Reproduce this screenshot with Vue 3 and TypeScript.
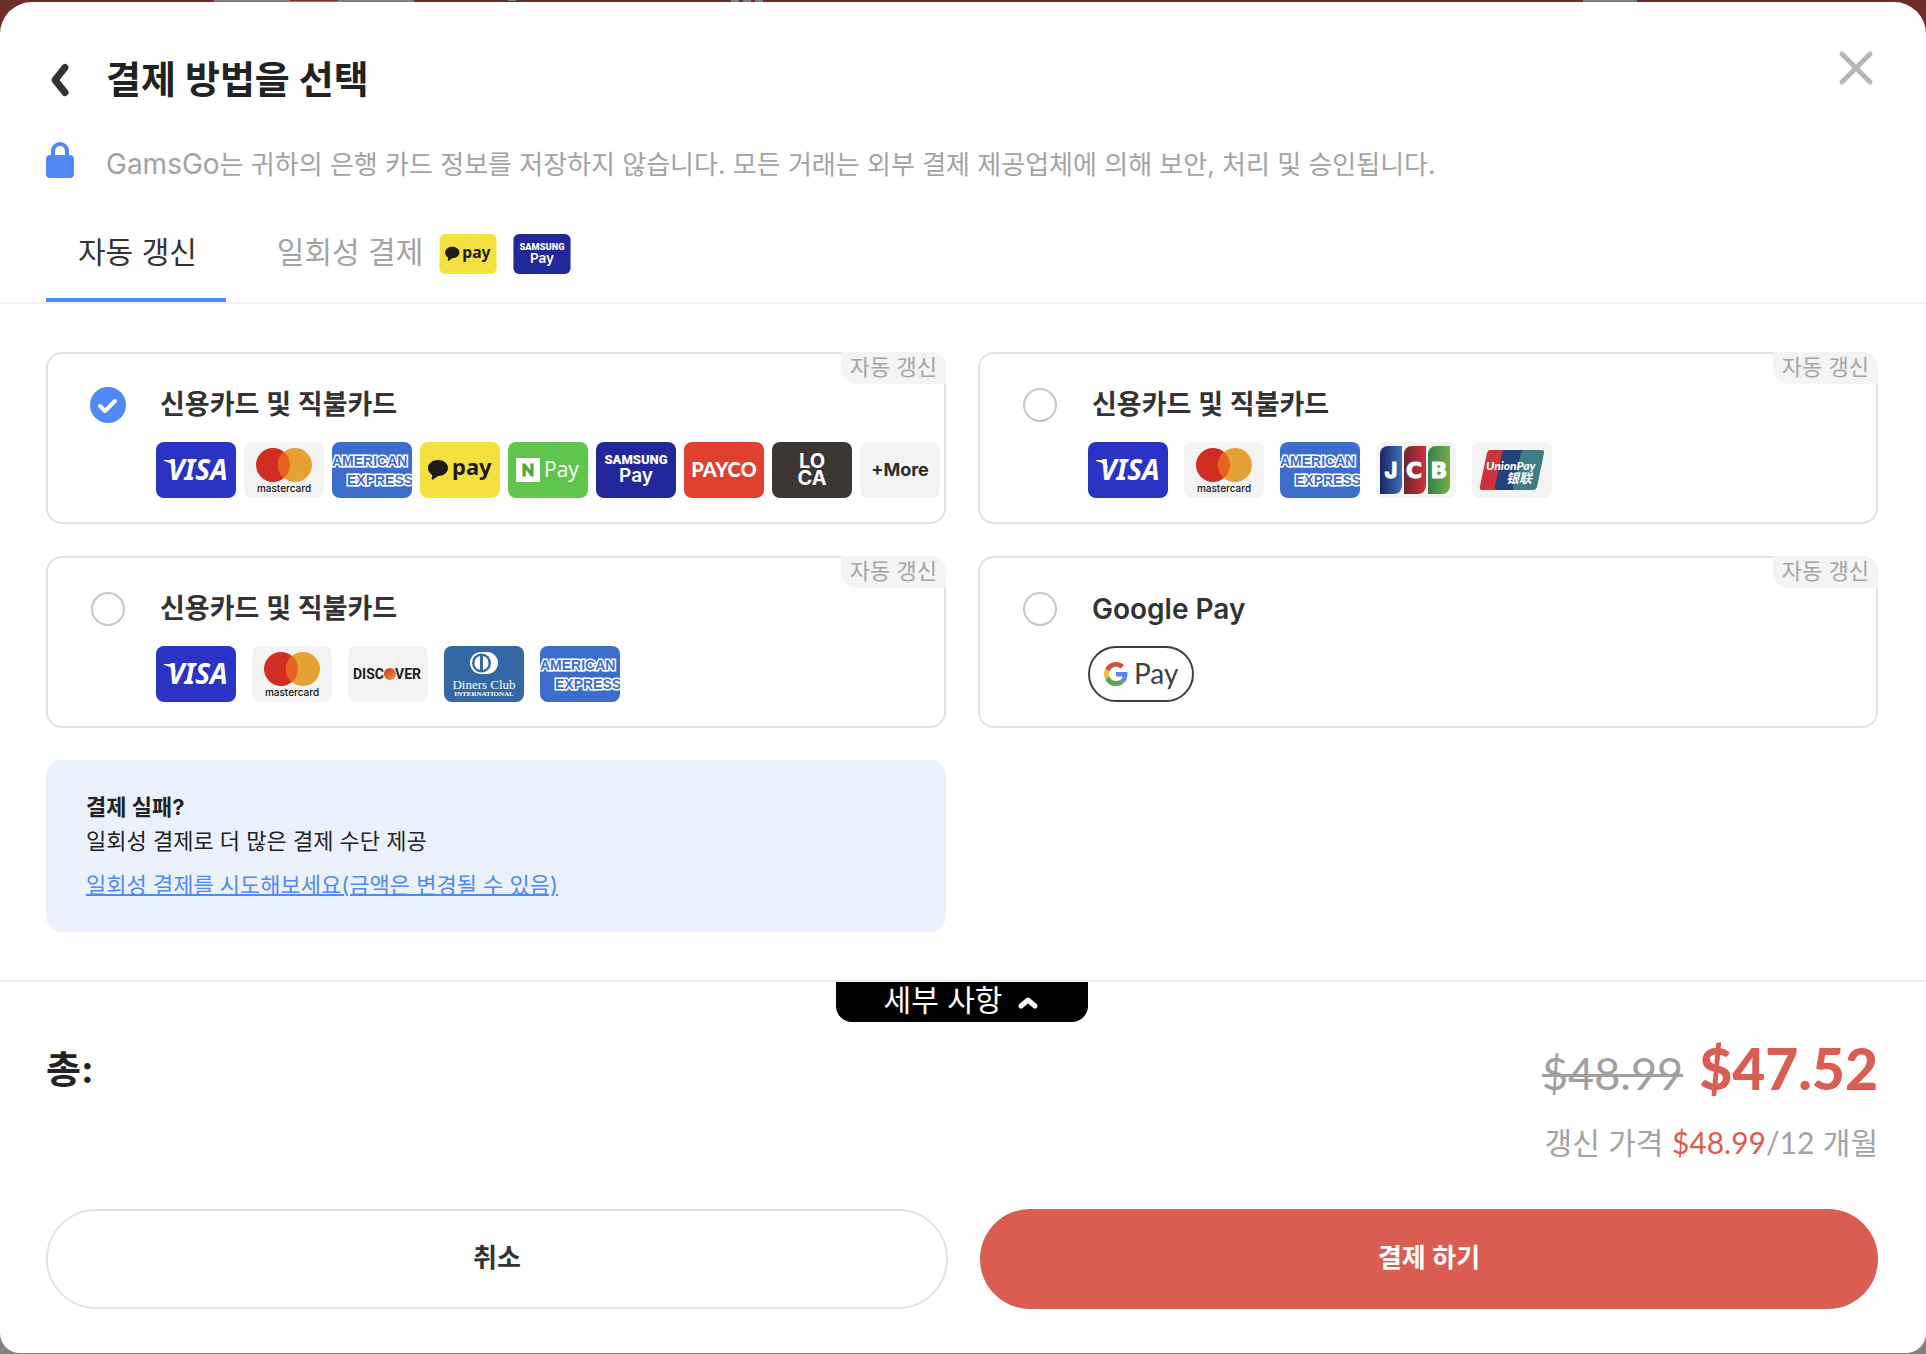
<script setup lang="ts">
import { ref } from 'vue'

type Logo =
  | 'visa' | 'mastercard' | 'amex' | 'kakao' | 'naver' | 'samsung' | 'payco'
  | 'loca' | 'more' | 'jcb' | 'unionpay' | 'discover' | 'diners' | 'gpay'

interface Method {
  id: string
  name: string
  logos: Logo[]
  dense?: boolean
}

const methods: Method[] = [
  {
    id: 'card-kr',
    name: '신용카드 및 직불카드',
    dense: true,
    logos: ['visa', 'mastercard', 'amex', 'kakao', 'naver', 'samsung', 'payco', 'loca', 'more'],
  },
  {
    id: 'card-asia',
    name: '신용카드 및 직불카드',
    logos: ['visa', 'mastercard', 'amex', 'jcb', 'unionpay'],
  },
  {
    id: 'card-global',
    name: '신용카드 및 직불카드',
    logos: ['visa', 'mastercard', 'discover', 'diners', 'amex'],
  },
  { id: 'google-pay', name: 'Google Pay', logos: ['gpay'] },
]

const tabs: { id: string; label: string; logos: Logo[] }[] = [
  { id: 'auto', label: '자동 갱신', logos: [] },
  { id: 'once', label: '일회성 결제', logos: ['kakao', 'samsung'] },
]

const selected = ref('card-kr')
const activeTab = ref('auto')
</script>

<template>
  <div class="backdrop">
    <svg width="0" height="0" class="defs" aria-hidden="true">
      <defs>
        <linearGradient id="jcb-blue"><stop offset="0" stop-color="#1c2466" /><stop offset="1" stop-color="#3a72b8" /></linearGradient>
        <linearGradient id="jcb-red"><stop offset="0" stop-color="#6a2730" /><stop offset="1" stop-color="#d3303c" /></linearGradient>
        <linearGradient id="jcb-green"><stop offset="0" stop-color="#33804b" /><stop offset="1" stop-color="#76b043" /></linearGradient>
        <linearGradient id="disc-orange" x1="0" y1="0" x2="1" y2="1"><stop offset="0.2" stop-color="#c9472c" /><stop offset="1" stop-color="#ee9a3a" /></linearGradient>

        <symbol id="logo-visa" viewBox="0 0 80 56">
          <rect width="80" height="56" rx="8" fill="#2b33c4" />
          <path d="M8 18h10l2 9c-3-5-7-7-12-8z" fill="#fff" />
          <text x="12" y="38" font-family="Noto Sans" font-size="28" font-weight="700" font-style="italic" fill="#fff">VISA</text>
        </symbol>
        <symbol id="logo-mastercard" viewBox="0 0 80 56">
          <rect width="80" height="56" rx="8" fill="#f4f4f4" />
          <circle cx="29" cy="23" r="17" fill="#d22d22" />
          <circle cx="51" cy="23" r="17" fill="#e6a136" />
          <path d="M40 10a17 17 0 0 1 0 26a17 17 0 0 1 0-26z" fill="#e7641f" />
          <text x="40" y="50" text-anchor="middle" font-family="Inter" font-size="10" font-weight="500" fill="#111">mastercard</text>
        </symbol>
        <symbol id="logo-amex" viewBox="0 0 80 56">
          <rect width="80" height="56" rx="8" fill="#3d6dcb" />
          <g font-family="Liberation Sans" font-size="14" font-weight="700" fill="#3d6dcb" stroke="#fff" stroke-width="3" paint-order="stroke">
            <text x="0" y="24">AMERICAN</text>
            <text x="15" y="43">EXPRESS</text>
          </g>
        </symbol>
        <symbol id="logo-kakao" viewBox="0 0 80 56">
          <rect width="80" height="56" rx="8" fill="#f4e13f" />
          <path d="M18 18c5.500 0 10 3.500 10 8s-4.500 8-10 8l-5 3.500c-1 .6-1.500 0-1.300-.9l.6-3.600C9.500 31.500 8 29 8 26c0-4.500 4.500-8 10-8z" fill="#1e1a16" />
          <text x="32" y="33" font-family="Noto Sans" font-size="22" font-weight="700" fill="#1e1a16">pay</text>
        </symbol>
        <symbol id="logo-naver" viewBox="0 0 80 56">
          <rect width="80" height="56" rx="8" fill="#5fc54e" />
          <rect x="8" y="16" width="24" height="24" fill="#fff" />
          <text x="20" y="34" text-anchor="middle" font-family="Lato" font-size="16" font-weight="900" fill="#4aa83c" stroke="#4aa83c">N</text>
          <text x="36" y="35" font-family="Open Sans" font-size="21" fill="#fff">Pay</text>
        </symbol>
        <symbol id="logo-samsung" viewBox="0 0 80 56">
          <rect width="80" height="56" rx="8" fill="#22289a" />
          <text x="40" y="22" text-anchor="middle" font-family="Roboto" font-size="13" font-weight="900" fill="#fff">SAMSUNG</text>
          <text x="40" y="40" text-anchor="middle" font-family="Inter" font-size="19" font-weight="600" fill="#fff">Pay</text>
        </symbol>
        <symbol id="logo-payco" viewBox="0 0 80 56">
          <rect width="80" height="56" rx="8" fill="#e0412e" />
          <text x="40" y="35" text-anchor="middle" font-family="Lato" font-size="20" font-weight="900" fill="#fff">PAYCO</text>
        </symbol>
        <symbol id="logo-loca" viewBox="0 0 80 56">
          <rect width="80" height="56" rx="8" fill="#3b3632" />
          <g text-anchor="middle" font-family="Inter" font-size="20" font-weight="700" fill="#fff">
            <text x="40" y="26">LO</text>
            <text x="40" y="43">CA</text>
          </g>
        </symbol>
        <symbol id="logo-more" viewBox="0 0 80 56">
          <rect width="80" height="56" rx="8" fill="#f4f4f4" />
          <text x="40" y="34" text-anchor="middle" font-family="Inter" font-size="18" font-weight="700" fill="#2b2b2b">+More</text>
        </symbol>
        <symbol id="logo-jcb" viewBox="0 0 80 56">
          <rect width="80" height="56" rx="8" fill="#f4f4f4" />
          <path d="M4 52V12a8 8 0 0 1 8-8h14v40a8 8 0 0 1-8 8z" fill="url(#jcb-blue)" />
          <path d="M28 52V12a8 8 0 0 1 8-8h14v40a8 8 0 0 1-8 8z" fill="url(#jcb-red)" />
          <path d="M52 52V12a8 8 0 0 1 8-8h14v40a8 8 0 0 1-8 8z" fill="url(#jcb-green)" />
          <g text-anchor="middle" font-weight="700" fill="#fff" stroke="#fff">
            <text x="15" y="36" font-family="Inter" font-size="22">J</text>
            <text x="38" y="36" font-family="DejaVu Sans" font-size="22">C</text>
            <text x="63" y="36" font-family="DejaVu Sans" font-size="22">B</text>
          </g>
        </symbol>
        <symbol id="logo-unionpay" viewBox="0 0 80 56">
          <rect width="80" height="56" rx="8" fill="#f4f4f4" />
          <path d="M18 8h18L28 48H10q-3 0-2-4l7-33q1-3 3-3z" fill="#cd3339" />
          <path d="M33 8h24L48 48H26q-4 0-3-4l7-33q1-3 3-3z" fill="#22427c" />
          <path d="M52 8h17q4 0 3 3l-7 34q-1 3-4 3H44q-4 0-3-4l8-33q1-3 3-3z" fill="#3f7c85" />
          <text x="14" y="28" font-family="Lato" font-size="12" font-weight="900" font-style="italic" fill="#fff">UnionPay</text>
          <text x="34" y="41" font-family="Noto Sans CJK SC" font-size="13" font-weight="700" font-style="italic" fill="#fff">银联</text>
        </symbol>
        <symbol id="logo-discover" viewBox="0 0 80 56">
          <rect width="80" height="56" rx="8" fill="#f4f4f4" />
          <circle cx="42" cy="28" r="6" fill="url(#disc-orange)" />
          <g font-family="Roboto" font-size="14" font-weight="700" fill="#1f1f1f">
            <text x="5" y="33">DISC</text>
            <text x="47" y="33">VER</text>
          </g>
        </symbol>
        <symbol id="logo-diners" viewBox="0 0 80 56">
          <rect width="80" height="56" rx="8" fill="#3468a5" />
          <path d="M37 6h6a11 11 0 0 1 0 22h-6a11 11 0 0 1 0-22z" fill="#fff" />
          <circle cx="37.500" cy="17" r="9.500" fill="#3468a5" />
          <path d="M36 10v14a7.200 7.200 0 0 1 0-14zM39 10v14a7.200 7.200 0 0 0 0-14z" fill="#fff" />
          <g text-anchor="middle" font-family="Liberation Serif" fill="#fff">
            <text x="40" y="43" font-size="13">Diners Club</text>
            <text x="40" y="50" font-size="7" font-weight="700">INTERNATIONAL</text>
          </g>
        </symbol>
        <symbol id="logo-gpay" viewBox="0 0 106 56">
          <rect x="1" y="1" width="104" height="54" rx="27" fill="#fff" stroke="#3c4043" stroke-width="2" />
          <g transform="translate(16 16) scale(.5)">
            <path fill="#d3503e" d="M24 9.500c3.540 0 6.710 1.220 9.210 3.600l6.850-6.850C35.900 2.380 30.470 0 24 0 14.620 0 6.510 5.380 2.560 13.220l7.980 6.190C12.430 13.720 17.740 9.500 24 9.500z" />
            <path fill="#5b86f0" d="M46.980 24.550c0-1.570-.15-3.090-.38-4.550H24v9.020h12.940c-.58 2.960-2.260 5.480-4.780 7.180l7.730 6c4.510-4.180 7.090-10.360 7.090-17.650z" />
            <path fill="#eebb35" d="M10.530 28.590c-.48-1.450-.76-2.990-.76-4.590s.27-3.140.76-4.590l-7.980-6.190C.92 16.460 0 20.120 0 24c0 3.880.92 7.540 2.560 10.780l7.970-6.190z" />
            <path fill="#57a65a" d="M24 48c6.480 0 11.930-2.130 15.890-5.810l-7.730-6c-2.150 1.450-4.920 2.300-8.160 2.300-6.260 0-11.570-4.220-13.470-9.910l-7.980 6.190C6.510 42.620 14.620 48 24 48z" />
          </g>
          <text x="46" y="38" font-family="Lato" font-size="28" fill="#3c4043">Pay</text>
        </symbol>
      </defs>
    </svg>

    <main class="sheet">
      <header class="header">
        <button class="back" type="button" aria-label="뒤로">
          <svg width="28" height="40" viewBox="0 0 28 40"><path d="M19 7.500 9 20l10 12.500" fill="none" stroke="#333" stroke-width="7" stroke-linecap="round" stroke-linejoin="round" /></svg>
        </button>
        <h1 class="title">결제 방법을 선택</h1>
        <button class="close" type="button" aria-label="닫기">
          <svg width="44" height="40" viewBox="0 0 44 40"><path d="M8 6l28 28M36 6 8 34" fill="none" stroke="#b8b8b8" stroke-width="5" stroke-linecap="round" /></svg>
        </button>
      </header>

      <p class="notice">
        <svg class="lock" width="28" height="36" viewBox="0 0 28 36" aria-hidden="true">
          <rect y="13" width="28" height="23" rx="4" fill="#5089f5" />
          <path d="M7 15V9a7 7 0 0 1 14 0v6" fill="none" stroke="#5089f5" stroke-width="4" />
        </svg>
        <span class="notice-text"><span class="brand">GamsGo</span>는 귀하의 은행 카드 정보를 저장하지 않습니다. 모든 거래는 외부 결제 제공업체에 의해 보안, 처리 및 승인됩니다.</span>
      </p>

      <nav class="tabs" role="tablist">
        <button
          v-for="tab in tabs"
          :key="tab.id"
          type="button"
          role="tab"
          class="tab"
          :class="{ active: tab.id === activeTab }"
          :aria-selected="tab.id === activeTab"
          @click="activeTab = tab.id"
        >
          <span class="tab-label">{{ tab.label }}</span>
          <svg v-for="logo in tab.logos" :key="logo" class="tab-logo"><use :href="`#logo-${logo}`" /></svg>
        </button>
      </nav>

      <section class="methods">
        <label v-for="m in methods" :key="m.id" class="card" :for="m.id">
          <span class="tag">자동 갱신</span>
          <input :id="m.id" v-model="selected" class="radio" type="radio" name="method" :value="m.id" />
          <span class="card-body">
            <span class="card-name" :class="{ latin: m.id === 'google-pay' }">{{ m.name }}</span>
            <span class="logos" :class="{ dense: m.dense }">
              <svg v-for="logo in m.logos" :key="logo" class="logo" :class="{ wide: logo === 'gpay' }"><use :href="`#logo-${logo}`" /></svg>
            </span>
          </span>
        </label>

        <aside class="help">
          <strong>결제 실패?</strong>
          <span>일회성 결제로 더 많은 결제 수단 제공</span>
          <a href="#once" @click.prevent="activeTab = 'once'">일회성 결제를 시도해보세요(금액은 변경될 수 있음)</a>
        </aside>
      </section>

      <footer class="footer">
        <button class="details" type="button">
          <span class="details-label">세부 사항</span>
          <svg width="24" height="16" viewBox="0 0 24 16"><path d="M5 12l7-6 7 6" fill="none" stroke="#fff" stroke-width="5" stroke-linecap="round" stroke-linejoin="round" /></svg>
        </button>
        <div class="total">
          <span class="total-label">총:</span>
          <span class="prices"><s class="old">$48.99</s><b class="new">$47.52</b></span>
        </div>
        <p class="renewal">갱신 가격 <span class="num accent">$48.99</span><span class="num">/12</span> 개월</p>
        <div class="actions">
          <button class="action cancel" type="button">취소</button>
          <button class="action pay" type="button">결제 하기</button>
        </div>
      </footer>
    </main>
  </div>
</template>

<style>
body {
  background: #808080;
}
</style>

<style scoped>
* {
  box-sizing: border-box;
}
.backdrop {
  padding-top: 2px;
  color: #222;
  font-family: "Inter", "Noto Sans CJK KR", sans-serif;
  background:
    linear-gradient(#80302a, #80302a) 290px 0 / 48px 1px no-repeat,
    linear-gradient(#808080, #808080) 214px 0 / 200px 2px no-repeat,
    linear-gradient(#808080, #808080) 508px 0 / 8px 1px no-repeat,
    repeating-linear-gradient(90deg, #808080 0 8px, #6f2d29 8px 12px) 731px 0 / 32px 2px no-repeat,
    linear-gradient(#808080, #808080) 1583px 0 / 54px 2px no-repeat,
    linear-gradient(#6f2d29, #6f2d29) 0 0 / 100% 60px no-repeat;
}
.defs {
  position: absolute;
}
button {
  margin: 0;
  padding: 0;
  border: 0;
  background: none;
  font: inherit;
  color: inherit;
  cursor: pointer;
}
svg {
  display: block;
}
.sheet {
  background: #fff;
  border-radius: 32px 32px 20px 20px;
  padding-bottom: 44px;
}
.header {
  display: flex;
  align-items: flex-start;
  padding: 46px 48px 0 46px;
}
.back {
  width: 60px;
  padding-top: 12px;
}
.title {
  flex: 1;
  margin: 7px 0 0;
  font-size: 38px;
  line-height: 48px;
  font-weight: 700;
}
.notice {
  display: flex;
  gap: 32px;
  margin: 39px 48px 0 46px;
  font-size: 26px;
  line-height: 40px;
  color: #a3a3a3;
}
.notice-text {
  padding-top: 2px;
}
.lock {
  flex: none;
}
.brand {
  font-size: 28px;
}
.tabs {
  display: flex;
  gap: 19px;
  margin-top: 19px;
  padding-left: 46px;
  border-bottom: 2px solid #f1f1f1;
}
.tab {
  position: relative;
  display: flex;
  align-items: center;
  gap: 16px;
  height: 98px;
  padding: 2px 29px 0 32px;
  font-size: 30px;
  color: #a3a3a3;
}
.tab-label {
  padding-bottom: 8px;
}
.tab.active {
  color: #333;
}
.tab.active::after {
  content: "";
  position: absolute;
  left: 0;
  right: 0;
  bottom: 0;
  height: 4px;
  background: #5089f5;
}
.tab-logo {
  width: 58px;
  height: 40px;
}
.methods {
  display: grid;
  grid-template-columns: 1fr 1fr;
  gap: 32px;
  padding: 48px 48px 48px 46px;
}
.card {
  position: relative;
  display: flex;
  min-width: 0;
  height: 172px;
  padding: 33px 0 0 42px;
  border: 2px solid #e1e1e1;
  border-radius: 16px;
  cursor: pointer;
}
.tag {
  position: absolute;
  top: -2px;
  right: -2px;
  height: 32px;
  padding: 0 9px;
  border-radius: 0 16px 0 16px;
  background: #f4f4f4;
  color: #a5a5a5;
  font-size: 22px;
  line-height: 30px;
}
.radio {
  appearance: none;
  flex: none;
  width: 34px;
  height: 34px;
  margin: 1px;
  border: 2px solid #c6c6c6;
  border-radius: 50%;
}
.radio:checked {
  border-color: #5089f5;
  background: #5089f5 url("data:image/svg+xml,%3Csvg xmlns='http://www.w3.org/2000/svg' viewBox='0 0 30 30'%3E%3Cpath d='M7 16l5 5 10-10' fill='none' stroke='white' stroke-width='4' stroke-linecap='round' stroke-linejoin='round'/%3E%3C/svg%3E") center / 30px 30px no-repeat;
  box-shadow: 0 0 0 1px #5089f5;
}
.card-body {
  display: flex;
  flex-direction: column;
  gap: 19px;
  padding-left: 30px;
}
.card-name {
  padding-left: 4px;
  font-size: 27px;
  line-height: 36px;
  font-weight: 600;
  color: #333;
}
.card-name.latin {
  font-size: 28px;
}
.logos {
  display: flex;
  gap: 16px;
}
.logos.dense {
  gap: 8px;
}
.logo {
  flex: none;
  width: 80px;
  height: 56px;
}
.logo.wide {
  width: 106px;
}
.help {
  display: flex;
  flex-direction: column;
  align-items: flex-start;
  height: 172px;
  padding: 30px 40px;
  border-radius: 16px;
  background: #ebf2fe;
  font-size: 22px;
  line-height: 34px;
}
.help a {
  margin-top: 10px;
  color: #5089f5;
  text-decoration-thickness: 2px;
}
.footer {
  padding: 0 48px 0 46px;
  border-top: 2px solid #f0eeee;
}
.details {
  display: flex;
  align-items: center;
  justify-content: center;
  gap: 14px;
  width: 252px;
  height: 40px;
  margin: 0 auto;
  border-radius: 0 0 16px 16px;
  background: #000;
  color: #fff;
  font-size: 30px;
  line-height: 36px;
}
.details-label {
  padding-bottom: 4px;
}
.total {
  display: flex;
  justify-content: space-between;
  align-items: center;
  height: 68px;
  margin-top: 14px;
}
.total-label {
  padding-bottom: 8px;
  font-size: 38px;
  font-weight: 700;
}
.prices {
  display: flex;
  align-items: baseline;
  gap: 16px;
  font-family: "Lato", sans-serif;
  line-height: 68px;
}
.old {
  font-size: 45px;
  color: #a0a0a0;
  text-decoration-thickness: 3px;
}
.new {
  font-size: 57px;
  font-weight: 900;
  color: #d95d50;
}
.renewal {
  margin: 18px 0 0;
  font-size: 30px;
  line-height: 40px;
  text-align: right;
  color: #a3a3a3;
}
.num {
  font-family: "Lato", sans-serif;
}
.accent {
  color: #d95d50;
}
.actions {
  display: flex;
  gap: 32px;
  margin-top: 46px;
}
.action {
  flex: 1 1 0;
  height: 100px;
  padding-bottom: 8px;
  border-radius: 50px;
  font-size: 26px;
  font-weight: 600;
}
.cancel {
  border: 2px solid #e3e3e3;
  color: #333;
}
.pay {
  background: #d95d50;
  color: #fff;
}
</style>
